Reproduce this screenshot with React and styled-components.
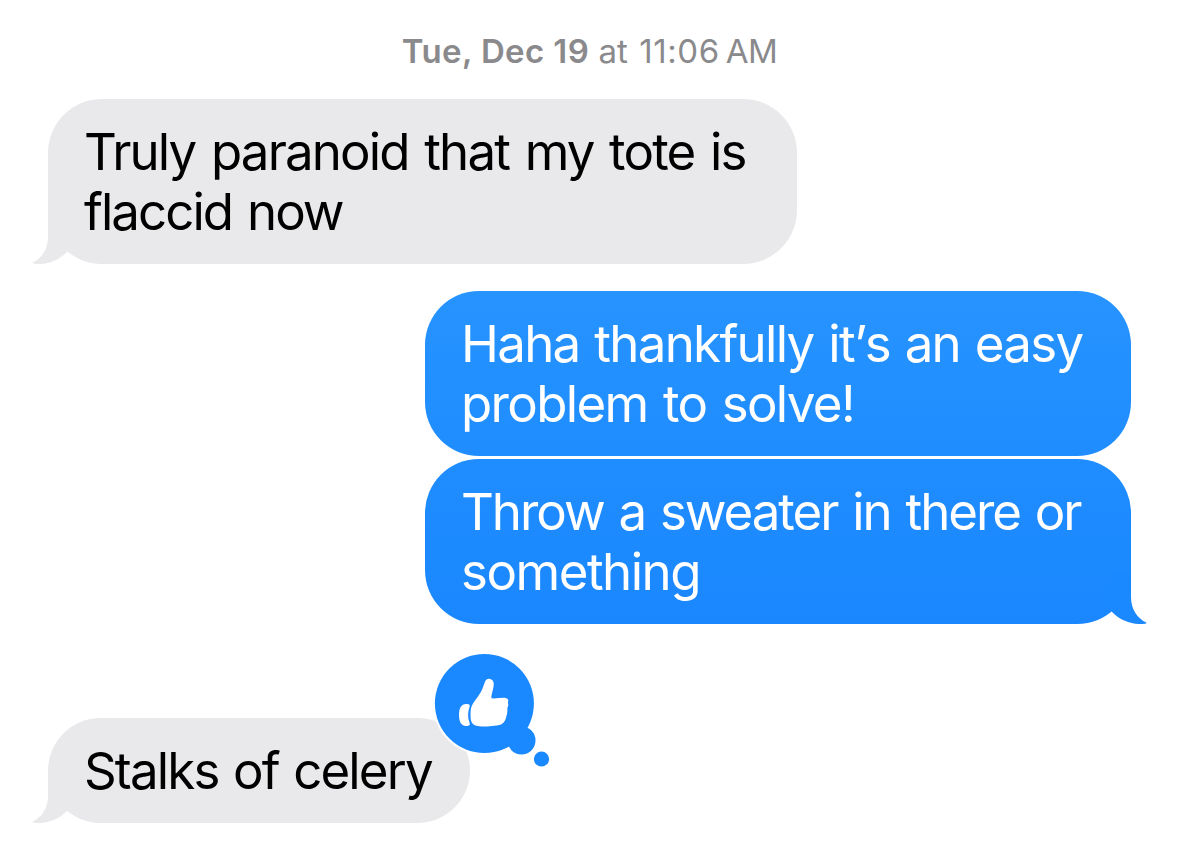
import React from "react";
import styled, { createGlobalStyle } from "styled-components";

const GlobalStyle = createGlobalStyle`
  * {
    box-sizing: border-box;
  }

  body {
    margin: 0;
    background: #fff;
    font-family: Inter, "Liberation Sans", sans-serif;
  }
`;

const Thread = styled.main`
  display: flex;
  flex-direction: column;
  width: 1179px;
  height: 851px;
  padding: 31px 48px 0;
  overflow: hidden;
`;

const Timestamp = styled.time`
  align-self: center;
  height: 40px;
  margin-bottom: 28px;
  font-size: 33px;
  line-height: 40px;
  color: #8a8a8d;
  white-space: nowrap;
`;

const Day = styled.strong`
  font-weight: 600;
  letter-spacing: 0.4px;
`;

const Clock = styled.span`
  margin-left: 2px;
  letter-spacing: 0.6px;
`;

const Meridiem = styled.span`
  margin-left: 6px;
  letter-spacing: -0.5px;
`;

const Group = styled.section`
  display: flex;
  flex-direction: column;
  align-items: ${(props) => (props.$sent ? "flex-end" : "flex-start")};
  gap: 3px;
  margin-bottom: ${(props) => props.$space || 0}px;
`;

const Bubble = styled.div`
  position: relative;
  width: ${(props) => props.$width}px;
  padding: 22.5px 36px;
  border-radius: 54px;
  background: ${(props) => props.$fill || "#e9e9eb"};
  color: ${(props) => (props.$sent ? "#fff" : "#000")};
`;

const Line = styled.span`
  display: block;
  font-size: 51px;
  line-height: 60px;
  letter-spacing: ${(props) => props.$tracking || 0}px;
  word-spacing: ${(props) => props.$gap || 0}px;
  white-space: nowrap;
`;

const Apostrophe = styled.span`
  letter-spacing: -2.5px;
`;

const TailShape = styled.svg`
  position: absolute;
  bottom: 0;
  ${(props) => (props.$sent ? "right: -16px; transform: scaleX(-1);" : "left: -16px;")}
`;

const Reaction = styled.svg`
  position: absolute;
  top: -68px;
  left: 382px;
`;

function Tail({ sent, color }) {
  return (
    <TailShape $sent={sent} width="50" height="52" viewBox="0 0 50 52" fill={color}>
      <path d="M16 0V25C16 37 10 46 0.8 50.6C0 51.4 1 52 4 52C15 52.500 26 49 35 40L42 24L30 0Z" />
    </TailShape>
  );
}

function ThumbsUp() {
  return (
    <Reaction width="124" height="124" viewBox="0 0 124 124">
      <circle cx="54.400" cy="53.500" r="51.500" fill="#fff" />
      <g fill="#1a88ff">
        <circle cx="54.400" cy="53.500" r="49.500" />
        <circle cx="91.500" cy="90.500" r="14" />
        <circle cx="111.500" cy="109" r="7.600" />
      </g>
      <g fill="#fff">
        <path d="M37 54C31.500 53.500 29 58 29 65C29 72 31.500 76 36 76C39.500 76 40.500 75 39.300 72C37.700 67.500 37.700 62 39.500 57C40.300 55 39.500 54 37 54Z" />
        <path d="M40.700 60C41.500 54 46 49.500 49 45C52 40.500 53.500 36 54.700 32.500C55.600 30 57 28.700 59 28.800C62.500 29 64.200 32 63.700 35.500C63.200 40 61.300 44 61.300 48.300C66 48.800 71 47.600 75.500 47.900C78 48.200 79 50 77.900 52.500C78.600 54.500 78.300 56.500 77.300 58C77.600 61 77.300 64 76.300 66.500C75.500 70 74.500 72.500 71.500 74.300C66 76.500 51 77.300 45.500 75.500C42.500 74.300 41 72 40.700 69C40.500 66 40.300 63 40.700 60Z" />
      </g>
    </Reaction>
  );
}

export default function App() {
  return (
    <>
      <GlobalStyle />
      <Thread>
        <Timestamp>
          <Day>Tue, Dec 19</Day> at <Clock>11:06</Clock>
          <Meridiem>AM</Meridiem>
        </Timestamp>

        {/* Received */}
        <Group $space={27}>
          <Bubble $width={749}>
            <Tail color="#e9e9eb" />
            <Line $tracking={-1.85} $gap={3.1}>Truly paranoid that my tote is</Line>
            <Line $tracking={-1.95} $gap={2.5}>flaccid now</Line>
          </Bubble>
        </Group>

        {/* Sent */}
        <Group $sent $space={94}>
          <Bubble $sent $width={706} $fill="linear-gradient(#2693ff, #1f8dff)">
            <Line $tracking={-1.7} $gap={2.1}>
              Haha thankfully it<Apostrophe>’</Apostrophe>s an easy
            </Line>
            <Line $tracking={-1.65} $gap={2.6}>problem to solve!</Line>
          </Bubble>
          <Bubble $sent $width={706} $fill="linear-gradient(#1f8dff, #1a87ff)">
            <Tail sent color="#1a88ff" />
            <Line $tracking={-2.05} $gap={2.6}>Throw a sweater in there or</Line>
            <Line $tracking={-1.5}>something</Line>
          </Bubble>
        </Group>

        {/* Received, with a tapback on the corner */}
        <Group>
          <Bubble $width={422}>
            <Tail color="#e9e9eb" />
            <Line $tracking={-1.85} $gap={2}>Stalks of celery</Line>
            <ThumbsUp />
          </Bubble>
        </Group>
      </Thread>
    </>
  );
}
